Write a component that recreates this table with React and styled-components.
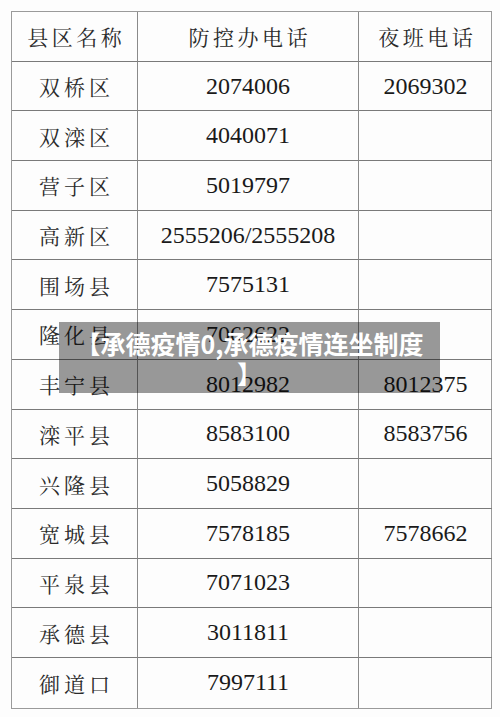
import React from 'react';
import styled, {createGlobalStyle} from 'styled-components';

const GlobalStyle = createGlobalStyle`
    html, body {
        margin: 0;
        padding: 0;
        background: #fff;
    }
    body {
        width: 500px;
        height: 717px;
        overflow: hidden;
    }
`;

const Page = styled.div`
    position: relative;
    width: 500px;
    height: 717px;
    padding: 11px 0 0 11px;
    box-sizing: border-box;
    background: #fdfdfd;
`;

const Table = styled.div`
    display: grid;
    grid-template-columns: 126px 221px 133px;
    grid-auto-rows: 49.7px;
    width: 481px;
    box-sizing: border-box;
    border: 1.5px solid #9a9a9a;
`;

const Cell = styled.div`
    display: flex;
    align-items: center;
    justify-content: center;
    box-sizing: border-box;
    border-right: ${p => p.$last ? 'none' : '1.5px solid #8a8a8a'};
    border-bottom: ${p => p.$bottom ? 'none' : '1.5px solid #7a7a7a'};
    color: #1e1e1e;
    white-space: nowrap;
`;

const Name = styled.span`
    font-family: "Noto Serif CJK SC", "Noto Sans CJK SC", serif;
    font-size: 21px;
    letter-spacing: ${p => p.$head ? '3.5px' : '4px'};
    margin-right: ${p => p.$head ? '-3.5px' : '-4px'};
    color: #2a2a2a;
`;

const Number = styled.span`
    font-family: "Liberation Serif", serif;
    font-size: 24px;
    color: #1a1a1a;
`;

const Caption = styled.div`
    position: absolute;
    left: 59px;
    top: 322px;
    width: 381px;
    height: 71px;
    box-sizing: border-box;
    padding: 6px 14px;
    background: rgba(0, 0, 0, 0.4);
    color: #fff;
    font-family: "Noto Sans CJK SC", sans-serif;
    font-weight: 700;
    font-size: 25px;
    line-height: 30px;
    text-align: center;
    line-break: anywhere;
`;

const rows = [
    ['双桥区', '2074006', '2069302'],
    ['双滦区', '4040071', ''],
    ['营子区', '5019797', ''],
    ['高新区', '2555206/2555208', ''],
    ['围场县', '7575131', ''],
    ['隆化县', '7062622', ''],
    ['丰宁县', '8012982', '8012375'],
    ['滦平县', '8583100', '8583756'],
    ['兴隆县', '5058829', ''],
    ['宽城县', '7578185', '7578662'],
    ['平泉县', '7071023', ''],
    ['承德县', '3011811', ''],
    ['御道口', '7997111', ''],
];

export default function App() {
    return (
        <Page>
            <GlobalStyle />
            <Table>
                <Cell><Name $head>县区名称</Name></Cell>
                <Cell><Name $head>防控办电话</Name></Cell>
                <Cell $last><Name $head>夜班电话</Name></Cell>
                {rows.map((row, i) => {
                    const bottom = i === rows.length - 1;
                    return (
                        <React.Fragment key={row[0]}>
                            <Cell $bottom={bottom}><Name>{row[0]}</Name></Cell>
                            <Cell $bottom={bottom}><Number>{row[1]}</Number></Cell>
                            <Cell $bottom={bottom} $last><Number>{row[2]}</Number></Cell>
                        </React.Fragment>
                    );
                })}
            </Table>
            <Caption>【承德疫情0,承德疫情连坐制度】</Caption>
        </Page>
    );
}
